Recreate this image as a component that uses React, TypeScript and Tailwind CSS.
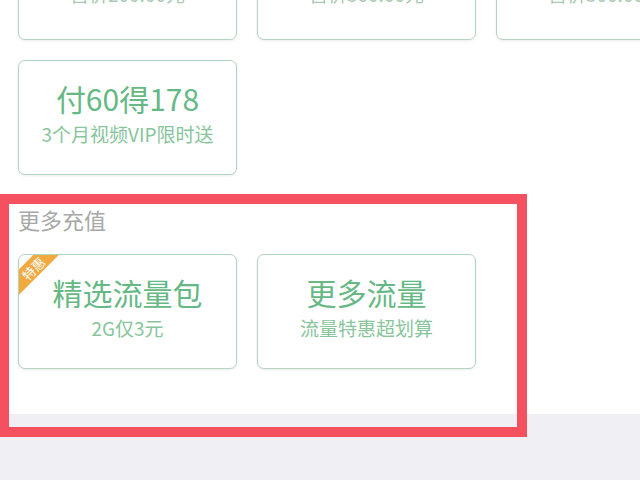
const font = { fontFamily: '"Noto Sans CJK SC", "Noto Sans", sans-serif' };

type Plan = { title: string; sub: string; badge?: string };

const topRow: Plan[] = [
  { title: "200元", sub: "售价200.00元" },
  { title: "300元", sub: "售价300.00元" },
  { title: "300元", sub: "售价300.00元" },
];

const more: Plan[] = [
  { title: "精选流量包", sub: "2G仅3元", badge: "特惠" },
  { title: "更多流量", sub: "流量特惠超划算" },
];

function Card({ plan }: { plan: Plan }) {
  return (
    <div className="relative w-[219px] h-[115px] shrink-0 rounded-[7px] border-[1.5px] border-[#b3d4bd] bg-white shadow-[0_1px_3px_rgba(0,0,0,0.08)] overflow-hidden flex flex-col items-center justify-center pb-[3px]">
      {plan.badge && (
        <div className="absolute left-[-31px] top-[4px] w-[90px] h-[18px] bg-[#f2a93f] -rotate-45 flex items-center justify-center">
          <span className="text-white text-[13px] leading-none">{plan.badge}</span>
        </div>
      )}
      <div className="text-[30px] leading-[36px] text-[#66b885]">{plan.title}</div>
      <div className="text-[19px] leading-[36px] text-[#88c49c]">{plan.sub}</div>
    </div>
  );
}

export default function App() {
  return (
    <div className="relative w-[640px] h-[480px] overflow-hidden bg-[#f0eff4]" style={font}>
      <div className="bg-white pl-[18px] pb-[45px]">
        {/* top row is scrolled partly out of view */}
        <div className="flex gap-[20px] -mt-[75px] w-max">
          {topRow.map((p, i) => (
            <div key={i} className="w-[219px] h-[115px] shrink-0 rounded-[7px] border-[1.5px] border-[#b3d4bd] bg-white shadow-[0_1px_3px_rgba(0,0,0,0.08)] flex flex-col items-center justify-end pb-[33px]">
              <div className="text-[19px] leading-[24px] text-[#a9c9b3]">{p.sub}</div>
            </div>
          ))}
        </div>
        <div className="mt-[20px]">
          <Card plan={{ title: "付60得178", sub: "3个月视频VIP限时送" }} />
        </div>
        <div className="mt-[31px] text-[22px] leading-[26px] text-[#a8a8a8]">更多充值</div>
        <div className="flex gap-[20px] mt-[22px]">
          {more.map((p, i) => (
            <Card key={i} plan={p} />
          ))}
        </div>
      </div>

      {/* highlight frame */}
      <div className="absolute left-[-1px] top-[194px] w-[528px] h-[243px] border-[10px] border-[#f5505f] pointer-events-none" />
    </div>
  );
}
